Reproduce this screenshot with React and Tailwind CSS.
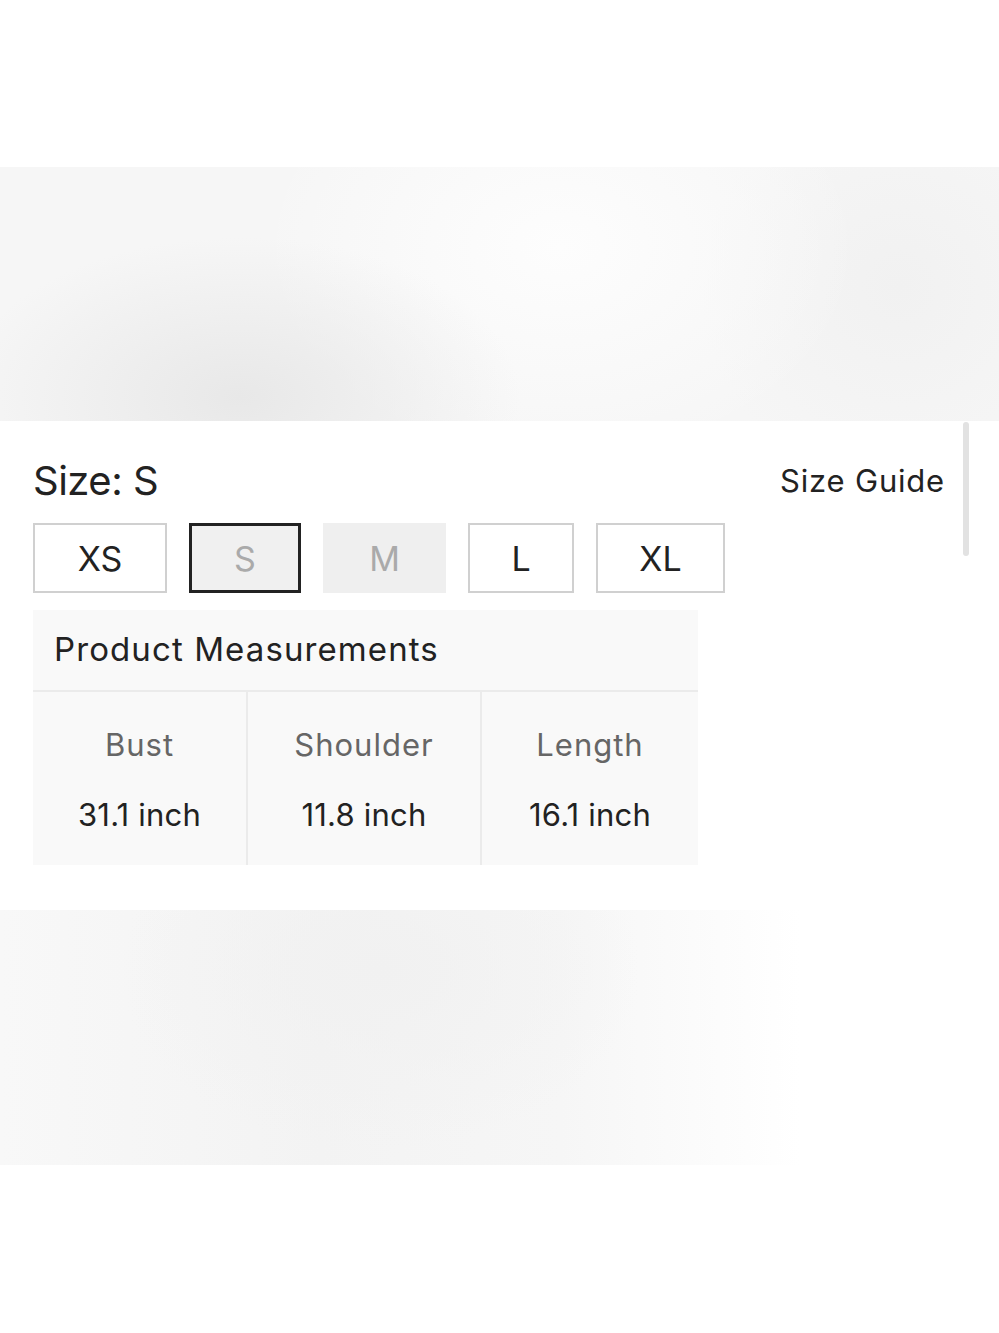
import React from 'react';

const sizes = [
  { label: 'XS', w: 'w-[134px]', state: 'normal' },
  { label: 'S', w: 'w-[112px]', state: 'selected' },
  { label: 'M', w: 'w-[123px]', state: 'disabled' },
  { label: 'L', w: 'w-[106px]', state: 'normal' },
  { label: 'XL', w: 'w-[129px]', state: 'normal' },
];

const measurements = [
  { name: 'Bust', value: '31.1 inch', w: 'w-[215px]' },
  { name: 'Shoulder', value: '11.8 inch', w: 'w-[234px]' },
  { name: 'Length', value: '16.1 inch', w: 'flex-1' },
];

const SizeButton = ({ label, w, state }) => {
  const base = 'h-[70px] flex items-center justify-center text-[34px] ' + w;
  if (state === 'selected') {
    return <div className={base + ' border-[3px] border-[#222] bg-[#f0f0f0] text-[#aaa]'}>{label}</div>;
  }
  if (state === 'disabled') {
    return <div className={base + ' bg-[#efefef] text-[#aaa]'}>{label}</div>;
  }
  return <div className={base + ' border-2 border-[#d0d0d0] bg-white text-[#222]'}>{label}</div>;
};

export default function App() {
  return (
    <div className="w-[999px] h-[1333px] bg-white overflow-hidden" style={{ fontFamily: 'Inter, "Noto Sans", sans-serif' }}>
      {/* top blank */}
      <div className="h-[167px]" />

      {/* blurred image band */}
      <div className="h-[254px] bg-[#f6f6f6] bg-[radial-gradient(ellipse_280px_160px_at_240px_230px,#e8e8e8,transparent),radial-gradient(ellipse_300px_220px_at_560px_80px,#fdfdfd,transparent),radial-gradient(ellipse_200px_200px_at_900px_120px,#f1f1f1,transparent)]" />

      {/* size section */}
      <div className="relative h-[489px] pl-[33px] pr-[54px]">
        <div className="absolute right-[30px] top-[1px] w-[6px] h-[134px] rounded-full bg-[#e2e2e2]" />

        <div className="flex items-center justify-between pt-[38px]">
          <div className="text-[40px] leading-[44px] text-[#222] tracking-[-0.5px]">Size: S</div>
          <div className="text-[31px] leading-[44px] text-[#222] tracking-[0.8px]">Size Guide</div>
        </div>

        <div className="flex gap-[22px] mt-[20px]">
          {sizes.map((s) => (
            <SizeButton key={s.label} {...s} />
          ))}
        </div>

        <div className="w-[665px] mt-[17px] bg-[#f9f9f9]">
          <div className="h-[82px] flex items-center pl-[21px] text-[33px] tracking-[1.1px] text-[#222] border-b-2 border-[#ebebeb]">
            Product Measurements
          </div>
          <div className="flex h-[173px]">
            {measurements.map((m, i) => (
              <div
                key={m.name}
                className={
                  'flex flex-col items-center pt-[33px] gap-[30px] ' +
                  m.w +
                  (i < measurements.length - 1 ? ' border-r-2 border-[#ebebeb]' : '')
                }
              >
                <div className="text-[31px] leading-[40px] tracking-[1px] text-[#666]">{m.name}</div>
                <div className="text-[31px] leading-[40px] tracking-[0.2px] text-[#222]">{m.value}</div>
              </div>
            ))}
          </div>
        </div>
      </div>

      {/* lower blurred image band */}
      <div className="w-[800px] h-[255px] bg-[#f6f6f6] bg-[radial-gradient(ellipse_260px_180px_at_380px_60px,#f1f1f1,transparent),linear-gradient(to_right,#f8f8f8,#f3f3f3_40%,#f6f6f6_70%,#ffffff)]" />
    </div>
  );
}
